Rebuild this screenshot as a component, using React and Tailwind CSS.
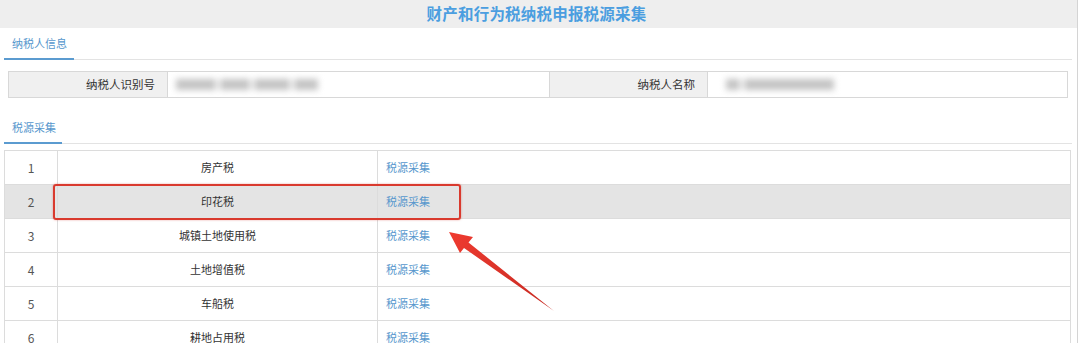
import React from 'react'

const font = { fontFamily: '"Noto Sans CJK SC", "Noto Sans", sans-serif' }

const rows = [
  { no: 1, name: '房产税' },
  { no: 2, name: '印花税', active: true },
  { no: 3, name: '城镇土地使用税' },
  { no: 4, name: '土地增值税' },
  { no: 5, name: '车船税' },
  { no: 6, name: '耕地占用税' },
]

function Tab({ label, width }) {
  return (
    <div className="flex w-[1068px] border-b border-[#e3e3e3]">
      <div className={`h-[32px] ${width} border-b-2 border-[#5b9bd0] -mb-px flex items-center pl-[8px] text-[11px] text-[#5697cd]`}>
        {label}
      </div>
    </div>
  )
}

function Blur({ widths }) {
  return (
    <div className="flex items-center gap-[4px] blur-[3px]">
      {widths.map((w, i) => (
        <div key={i} className={`h-[11px] ${w} bg-[#c4c4c4]`} />
      ))}
    </div>
  )
}

export default function App() {
  return (
    <div style={font} className="relative w-[1080px] h-[343px] overflow-hidden bg-white text-[#333]">
      <div className="w-[1078px] h-full border-r border-[#d4d4d4]">
        {/* title bar */}
        <div className="h-[28px] bg-[#eeeeee] flex items-center justify-center pr-[4px]">
          <span className="text-[15.5px] font-bold text-[#4b9ee0] tracking-[0.2px]">财产和行为税纳税申报税源采集</span>
        </div>

        <div className="pl-[4px]">
          <Tab label="纳税人信息" width="w-[70px]" />

          {/* taxpayer info */}
          <div className="mt-[11px] ml-[4px] w-[1060px] h-[27px] border border-[#d8d8d8] grid grid-cols-[159px_381px_159px_1fr] text-[11.5px]">
            <div className="bg-[#f0f0f0] border-r border-[#d8d8d8] flex items-center justify-end pr-[12px]">纳税人识别号</div>
            <div className="flex items-center pl-[8px]">
              <Blur widths={['w-[40px]', 'w-[30px]', 'w-[36px]', 'w-[24px]']} />
            </div>
            <div className="bg-[#f0f0f0] border-x border-[#d8d8d8] flex items-center justify-end pr-[12px]">纳税人名称</div>
            <div className="flex items-center pl-[18px]">
              <Blur widths={['w-[14px]', 'w-[90px]']} />
            </div>
          </div>

          <div className="mt-[14px]">
            <Tab label="税源采集" width="w-[58px]" />
          </div>

          {/* source table */}
          <div className="mt-[6px] w-[1067px] border-t border-x border-[#dcdcdc] text-[11px]">
            {rows.map((r) => (
              <div
                key={r.no}
                className={`grid grid-cols-[53px_320px_1fr] h-[34px] border-b border-[#dcdcdc] ${r.active ? 'bg-[#e4e4e4]' : 'bg-white'}`}
              >
                <div className="flex items-center justify-center border-r border-[#dcdcdc] text-[12px] text-[#555]">{r.no}</div>
                <div className="flex items-center justify-center border-r border-[#dcdcdc]">{r.name}</div>
                <div className="flex items-center pl-[8px] text-[#5697cd]">税源采集</div>
              </div>
            ))}
          </div>
        </div>
      </div>

      {/* annotation: red highlight box */}
      <div className="absolute left-[53px] top-[184px] w-[408px] h-[36px] border-2 border-[#d93a2e] rounded-[3px] shadow-[0_0_2px_rgba(217,58,46,0.5)]" />

      {/* annotation: arrow */}
      <svg className="absolute left-0 top-0" width="1080" height="343" viewBox="0 0 1080 343">
        <defs>
          <linearGradient id="arr" x1="553" y1="310" x2="449" y2="232" gradientUnits="userSpaceOnUse">
            <stop offset="0" stopColor="#c62a22" />
            <stop offset="1" stopColor="#ef3b30" />
          </linearGradient>
        </defs>
        <polygon
          points="449,232 473,237 468.5,242.5 554,311 464,248 460,253"
          fill="url(#arr)"
        />
      </svg>
    </div>
  )
}
